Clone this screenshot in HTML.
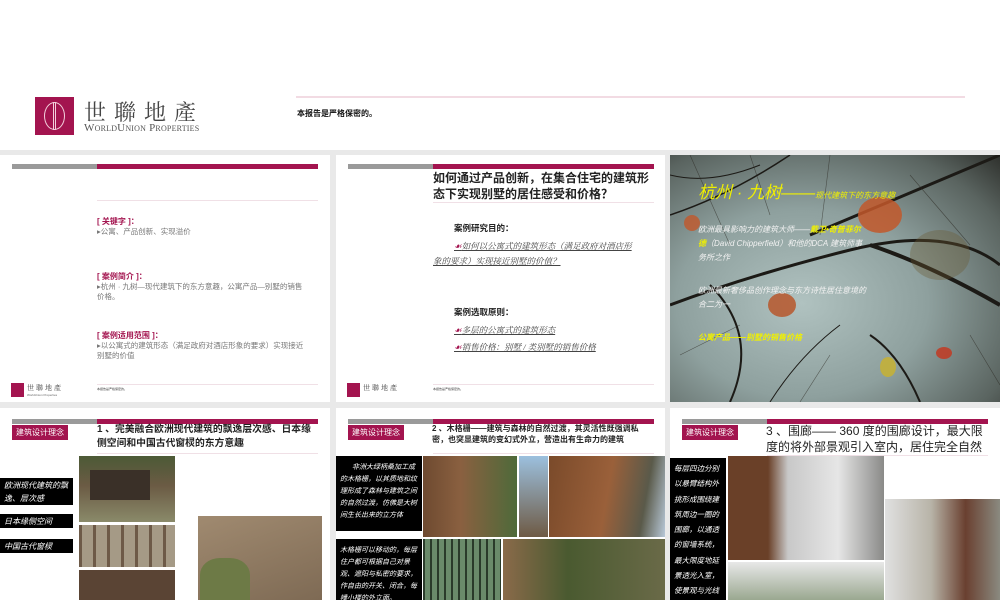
<!DOCTYPE html>
<html><head><meta charset="utf-8"><style>
*{margin:0;padding:0;box-sizing:border-box}
body{width:1000px;height:600px;overflow:hidden;background:#e9e9e9;position:relative;font-family:"Liberation Sans","Noto Sans CJK SC",sans-serif}
.a{position:absolute}
.s{position:absolute;background:#fff;overflow:hidden}
.g{position:absolute;height:5px;background:#9a9a9a}
.m{position:absolute;height:5px;background:#a3144f}
.ln{position:absolute;height:1px;background:#f0e0e6}
.tag{position:absolute;background:#a3144f;color:#fff;font-size:8px;line-height:15px;padding-left:4px;width:56px;height:15px;white-space:nowrap}
.bk{position:absolute;background:#000;color:#fff;font-style:italic;font-size:8px;line-height:13px;padding:3px 4px}
.lbl{color:#a3144f;font-size:8px;font-weight:bold;line-height:11px}
.txt{color:#777;font-size:7.5px;line-height:10px}
.ph{position:absolute}
</style></head><body>
<div class="a" style="left:0;top:0;width:1000px;height:150px;background:#fff"></div>
<div class="a" style="left:35px;top:97px;width:39px;height:38px;background:#a3144f"></div>
<div class="a" style="left:44px;top:102px;width:21px;height:28px;border:1.5px solid #f3d0dc;border-radius:50%"></div>
<div class="a" style="left:53px;top:102px;width:3px;height:28px;border-left:1px solid #f3d0dc;border-right:1px solid #f3d0dc"></div>
<div class="a" style="left:84px;top:96px;font-family:'Noto Serif CJK SC',serif;font-size:22px;letter-spacing:8px;color:#444">世聯地產</div>
<div class="a" style="left:84px;top:122px;font-family:'Liberation Serif',serif;font-size:11px;color:#555;letter-spacing:0.2px">W<span style="font-size:8px">ORLD</span>U<span style="font-size:8px">NION</span> P<span style="font-size:8px">ROPERTIES</span></div>
<div class="a" style="left:296px;top:96px;width:669px;height:2px;background:#f2dbe3"></div>
<div class="a" style="left:297px;top:108px;font-size:8px;font-weight:bold;color:#111">本报告是严格保密的。</div>

<!-- slide 1 -->
<div class="s" style="left:0;top:155px;width:330px;height:247px">
<div class="g" style="left:12px;top:9px;width:85px"></div><div class="m" style="left:97px;top:9px;width:221px"></div>
<div class="ln" style="left:97px;top:45px;width:221px"></div>
<div class="a" style="left:97px;top:61px"><div class="lbl">[ 关键字 ]：</div><div class="txt">▸公寓、产品创新、实现溢价</div></div>
<div class="a" style="left:97px;top:116px;width:210px"><div class="lbl">[ 案例简介 ]：</div><div class="txt">▸杭州 · 九树—现代建筑下的东方意趣，公寓产品—别墅的销售价格。</div></div>
<div class="a" style="left:97px;top:175px;width:210px"><div class="lbl">[ 案例适用范围 ]：</div><div class="txt">▸以公寓式的建筑形态（满足政府对酒店形象的要求）实现接近别墅的价值</div></div>
<div class="ln" style="left:97px;top:229px;width:221px"></div>
<div class="a" style="left:11px;top:228px;width:13px;height:14px;background:#a3144f"></div>
<div class="a" style="left:27px;top:228px;font-size:7px;color:#444;letter-spacing:2px;font-family:'Noto Serif CJK SC',serif">世聯地產</div>
<div class="a" style="left:27px;top:238px;font-size:3px;color:#666">WorldUnion Properties</div>
<div class="a" style="left:97px;top:232px;font-size:3px;color:#444">本报告是严格保密的。</div>
</div>

<!-- slide 2 -->
<div class="s" style="left:336px;top:155px;width:329px;height:247px">
<div class="g" style="left:12px;top:9px;width:85px"></div><div class="m" style="left:97px;top:9px;width:221px"></div>
<div class="a" style="left:97px;top:15px;width:225px;font-size:12px;line-height:16px;font-weight:bold;color:#222">如何通过产品创新，在集合住宅的建筑形态下实现别墅的居住感受和价格？</div>
<div class="ln" style="left:97px;top:47px;width:221px"></div>
<div class="a" style="left:118px;top:67px;font-size:8.5px;font-weight:bold;color:#222">案例研究目的：</div>
<div class="a" style="left:97px;top:84px;width:200px;font-family:'Liberation Serif','Noto Serif CJK SC',serif;font-size:8.5px;line-height:15px;font-style:italic;text-decoration:underline;color:#444;text-indent:21px"><span style="color:#a3144f">☙</span>如何以公寓式的建筑形态（满足政府对酒店形象的要求）实现接近别墅的价值？</div>
<div class="a" style="left:118px;top:151px;font-size:8.5px;font-weight:bold;color:#222">案例选取原则：</div>
<div class="a" style="left:118px;top:167px;font-family:'Liberation Serif','Noto Serif CJK SC',serif;font-size:8.5px;line-height:17px;font-style:italic;text-decoration:underline;color:#444"><span style="color:#a3144f">☙</span>多层的公寓式的建筑形态<br><span style="color:#a3144f">☙</span>销售价格：别墅 / 类别墅的销售价格</div>
<div class="ln" style="left:97px;top:229px;width:221px"></div>
<div class="a" style="left:11px;top:228px;width:13px;height:14px;background:#a3144f"></div>
<div class="a" style="left:27px;top:228px;font-size:7px;color:#444;letter-spacing:2px;font-family:'Noto Serif CJK SC',serif">世聯地產</div>
<div class="a" style="left:97px;top:232px;font-size:3px;color:#444">本报告是严格保密的。</div>
</div>

<!-- slide 3 -->
<div class="s" style="left:670px;top:155px;width:330px;height:247px;background:radial-gradient(ellipse at 40% 60%,#b0c2c0 0%,#8ea09e 45%,#5a6460 80%,#2e302c 100%)">
<svg class="a" style="left:0;top:0" width="330" height="247"><g stroke="#1c1a16" fill="none" stroke-width="3"><path d="M0 150 Q80 120 180 95 T330 110"/><path d="M140 80 L330 0"/><path d="M200 90 Q260 110 330 150" stroke-width="4"/><path d="M60 247 Q90 180 40 130" stroke-width="2"/><path d="M250 247 Q230 200 200 180" stroke-width="2"/><path d="M0 60 Q60 40 120 0" stroke-width="1.5"/><path d="M0 20 Q40 30 90 10" stroke-width="1"/><path d="M100 247 Q130 200 170 170" stroke-width="1"/></g>
<g stroke="#2a2620" stroke-width="0.6" fill="none" opacity=".6"><path d="M20 0 L60 90 M80 0 L100 60 M160 0 L150 80 M240 20 L300 90 M300 180 L330 230 M10 200 L70 170 M130 247 L160 200"/></g>
<ellipse cx="210" cy="60" rx="22" ry="18" fill="#c2582a" opacity=".85"/><ellipse cx="112" cy="150" rx="14" ry="12" fill="#b7572c" opacity=".85"/><ellipse cx="22" cy="68" rx="8" ry="8" fill="#c2582a" opacity=".8"/><ellipse cx="218" cy="212" rx="8" ry="10" fill="#c7b232" opacity=".85"/><ellipse cx="274" cy="198" rx="8" ry="6" fill="#c23a22" opacity=".85"/><ellipse cx="270" cy="100" rx="30" ry="25" fill="#6b5a30" opacity=".35"/></svg>
<div class="a" style="left:28px;top:23px;color:#f0f000;font-style:italic;font-size:17px;white-space:nowrap">杭州 · 九树——<span style="font-size:8px">现代建筑下的东方意趣</span></div>
<div class="a" style="left:28px;top:68px;width:170px;color:#f2f2f2;font-style:italic;font-size:8px;line-height:14px">欧洲最具影响力的建筑大师——<b style="color:#f0f000">戴卫•奇普菲尔德</b>（David Chipperfield）和他的DCA 建筑师事务所之作</div>
<div class="a" style="left:28px;top:129px;width:175px;color:#f2f2f2;font-style:italic;font-size:8px;line-height:14px">欧洲最新奢侈品创作理念与东方诗性居住意境的合二为一</div>
<div class="a" style="left:28px;top:177px;color:#f0f000;font-style:italic;font-weight:bold;font-size:8px">公寓产品——别墅的销售价格</div>
</div>

<!-- slide 4 -->
<div class="s" style="left:0;top:408px;width:330px;height:192px">
<div class="g" style="left:12px;top:11px;width:85px"></div><div class="m" style="left:97px;top:11px;width:221px"></div>
<div class="tag" style="left:12px;top:17px">建筑设计理念</div>
<div class="a" style="left:97px;top:15px;width:218px;font-size:9.8px;line-height:14px;font-weight:bold;color:#222">1 、完美融合欧洲现代建筑的飘逸层次感、日本缘侧空间和中国古代窗棂的东方意趣</div>
<div class="ln" style="left:97px;top:45px;width:221px"></div>
<div class="ph" style="left:79px;top:48px;width:96px;height:66px;background:linear-gradient(180deg,#4c5a36 0%,#6b5b44 45%,#8a8a6a 100%)"></div>
<div class="ph" style="left:90px;top:62px;width:60px;height:30px;background:#3a3028"></div>
<div class="ph" style="left:79px;top:117px;width:96px;height:42px;background:repeating-linear-gradient(90deg,#6d5a48 0 3px,#a59a86 3px 14px)"></div>
<div class="ph" style="left:79px;top:162px;width:96px;height:30px;background:#5a4434"></div>
<div class="ph" style="left:198px;top:108px;width:124px;height:84px;background:linear-gradient(160deg,#a08a70,#7e6a54)"></div>
<div class="ph" style="left:200px;top:150px;width:50px;height:42px;background:#6d7a46;border-radius:40% 40% 0 0"></div>
<div class="bk" style="left:0;top:70px;width:73px;height:27px;padding-top:1px">欧洲现代建筑的飘逸、层次感</div>
<div class="bk" style="left:0;top:106px;width:73px;height:14px;padding-top:1px">日本缘侧空间</div>
<div class="bk" style="left:0;top:131px;width:73px;height:14px;padding-top:1px">中国古代窗棂</div>
</div>

<!-- slide 5 -->
<div class="s" style="left:336px;top:408px;width:329px;height:192px">
<div class="g" style="left:12px;top:11px;width:85px"></div><div class="m" style="left:97px;top:11px;width:221px"></div>
<div class="tag" style="left:12px;top:17px">建筑设计理念</div>
<div class="a" style="left:96px;top:15px;width:212px;font-size:8px;line-height:11px;font-weight:bold;color:#222">2 、木格栅——建筑与森林的自然过渡，其灵活性既强调私密，也突显建筑的变幻式外立，营造出有生命力的建筑</div>
<div class="ln" style="left:97px;top:45px;width:221px"></div>
<div class="bk" style="left:0;top:48px;width:86px;height:75px;font-size:7px;line-height:12px;text-indent:12px;padding:6px 4px">非洲大绿柄桑加工成的木格栅，以其质地和纹理形成了森林与建筑之间的自然过渡，仿佛是大树间生长出来的立方体</div>
<div class="bk" style="left:0;top:131px;width:86px;height:61px;font-size:7px;line-height:12px;padding:6px 4px">木格栅可以移动的，每层住户都可根据自己对景观、遮阳与私密的要求，作自由的开关、闭合，每幢小楼的外立面。</div>
<div class="ph" style="left:87px;top:48px;width:94px;height:81px;background:linear-gradient(90deg,#6e4a30,#8a6040 40%,#4e6a3a)"></div>
<div class="ph" style="left:183px;top:48px;width:29px;height:81px;background:linear-gradient(180deg,#9cc0de,#6e5a44)"></div>
<div class="ph" style="left:213px;top:48px;width:116px;height:81px;background:linear-gradient(100deg,#7a4a2a,#9a603a 50%,#5a5a4a 80%,#b8c8d8)"></div>
<div class="ph" style="left:87px;top:131px;width:78px;height:61px;background:repeating-linear-gradient(90deg,#2a3a2a 0 2px,#6a8a6a 2px 7px)"></div>
<div class="ph" style="left:167px;top:131px;width:162px;height:61px;background:linear-gradient(90deg,#8a6a4a,#4a5a30 40%,#6a6a48)"></div>
</div>

<!-- slide 6 -->
<div class="s" style="left:670px;top:408px;width:330px;height:192px">
<div class="g" style="left:12px;top:11px;width:85px"></div><div class="m" style="left:97px;top:11px;width:221px"></div>
<div class="tag" style="left:12px;top:17px">建筑设计理念</div>
<div class="a" style="left:96px;top:15px;width:222px;height:33px;overflow:hidden;font-size:12px;line-height:16px;color:#222">3 、围廊—— 360 度的围廊设计，最大限度的将外部景观引入室内，居住完全自然</div>
<div class="ln" style="left:97px;top:47px;width:221px"></div>
<div class="bk" style="left:0;top:50px;width:56px;height:142px;font-size:7.5px;line-height:15.3px;padding:3px 4px">每层四边分别以悬臂结构外挑形成围绕建筑周边一圈的围廊，以通透的窗墙系统，最大限度地延景透光入室，使景观与光线形成</div>
<div class="ph" style="left:58px;top:48px;width:156px;height:104px;background:linear-gradient(90deg,#6a4028 0 40px,#c8c8c8 60px,#e6e6e6 110px,#8a8a88)"></div>
<div class="ph" style="left:58px;top:154px;width:156px;height:38px;background:linear-gradient(180deg,#e8e8e8,#9aa890)"></div>
<div class="ph" style="left:215px;top:91px;width:115px;height:101px;background:linear-gradient(90deg,#e0e0e0,#b8b4a8 40%,#6a4030 70%,#8a8a80)"></div>
</div>
</body></html>
